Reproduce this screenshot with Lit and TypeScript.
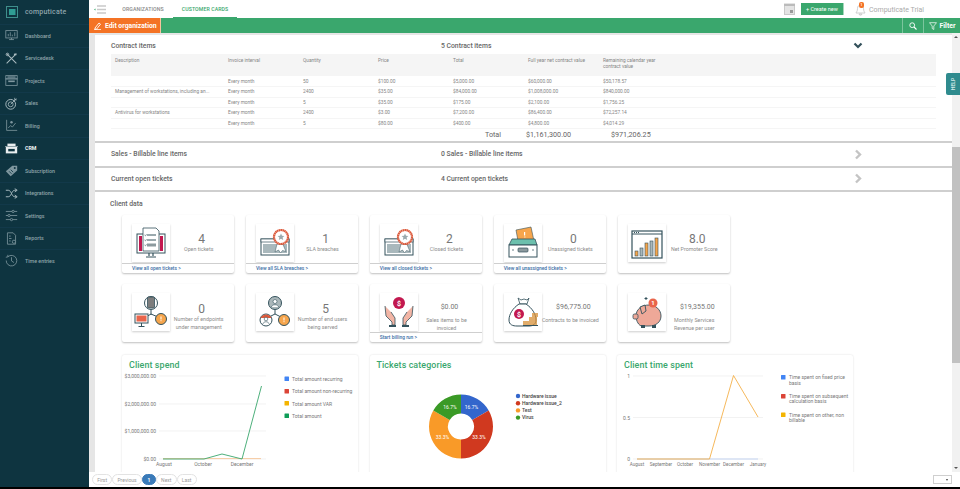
import { LitElement, html, css, svg } from "lit";
import { customElement } from "lit/decorators.js";

const S = "#7f979f";
const navIcons: Record<string, any> = {
  Dashboard: svg`<rect x="1" y="2" width="14" height="9" fill="none" stroke="${S}"/><path d="M4 9V6M6.5 9V4M9 9V7M12 9V4M5 13h6M8 11v2" stroke="${S}" fill="none"/>`,
  Servicedesk: svg`<path d="M2 2l12 12M14 2L2 14" stroke="#a9babf" stroke-width="1.3" fill="none"/><circle cx="3" cy="3" r="1.6" fill="none" stroke="#a9babf"/><rect x="11" y="2" width="3" height="2" fill="#a9babf"/>`,
  Projects: svg`<rect x="1" y="2" width="14" height="4" fill="none" stroke="${S}"/><rect x="1" y="6" width="14" height="8" fill="none" stroke="${S}"/><rect x="4" y="8" width="8" height="2" fill="${S}"/><rect x="3" y="3" width="10" height="1.5" fill="${S}"/>`,
  Sales: svg`<circle cx="7" cy="9" r="6" fill="none" stroke="#a9babf" stroke-width="1.2"/><circle cx="7" cy="9" r="3" fill="none" stroke="#a9babf"/><path d="M7 9l7-7M12 1v2.500h2.500" stroke="#a9babf" fill="none"/>`,
  Billing: svg`<path d="M2 1v13h13" fill="none" stroke="${S}"/><path d="M4 11l3-3 2 2 4-5" fill="none" stroke="${S}"/><circle cx="8" cy="4" r="1.500" fill="${S}"/>`,
  CRM: svg`<rect x="1" y="6" width="14" height="8" fill="#e9eef0"/><rect x="3" y="2" width="10" height="3" fill="#e9eef0"/><rect x="4" y="8.500" width="8" height="3" fill="#0e3440"/><rect x="0" y="5" width="16" height="1" fill="#9fb0b5"/>`,
  Subscription: svg`<path d="M1 9l8-7h6v6l-8 7z" fill="${S}"/><circle cx="12" cy="5" r="1.200" fill="#0e3440"/><path d="M5 9l3 3M7 7l3 3" stroke="#0e3440" fill="none"/>`,
  Integrations: svg`<path d="M1 4h3c4 0 4 8 8 8h2M1 12h3c4 0 4-8 8-8h2M12 2l3 2-3 2M12 10l3 2-3 2" stroke="#a9babf" stroke-width="1.200" fill="none"/>`,
  Settings: svg`<path d="M1 3h14M1 8h14M1 13h14" stroke="${S}" fill="none"/><circle cx="10" cy="3" r="1.400" fill="#0e3440" stroke="${S}"/><circle cx="5" cy="8" r="1.400" fill="#0e3440" stroke="${S}"/><circle cx="8" cy="13" r="1.400" fill="#0e3440" stroke="${S}"/>`,
  Reports: svg`<path d="M3 1h7l3 3v11H3z" fill="none" stroke="${S}"/><path d="M5 5h2M5 8h3M5 11h2" stroke="${S}" fill="none"/><circle cx="11" cy="12" r="2" fill="#0e3440" stroke="${S}"/>`,
  "Time entries": svg`<path d="M3.500 3.500A6.500 6.500 0 1 1 1.500 8" fill="none" stroke="${S}"/><path d="M8 4v4.500l3 2M1 4l2.500-.500V1" stroke="${S}" fill="none"/>`,
};
const nav = ["Dashboard", "Servicedesk", "Projects", "Sales", "Billing", "CRM", "Subscription", "Integrations", "Settings", "Reports", "Time entries"];

const D = "#34525c";
const badge = svg`
  <rect x="5" y="15" width="28" height="16" fill="#fff" stroke="${D}" stroke-width="1"/>
  <rect x="5" y="15" width="28" height="3" fill="#fff" stroke="${D}" stroke-width=".7"/>
  <rect x="7" y="20" width="24" height="9" fill="#a9b8bc"/>
  <path d="M21 20l-2 8 3.500-2 2 3 2-2.500 3.500 1-3-7z" fill="#fff" stroke="${D}" stroke-width=".5"/>
  <circle cx="25" cy="13" r="7" fill="#fff" stroke="#dc5a3c" stroke-width="2.200" stroke-dasharray="1.600 .3"/>
  <path d="M25 9.500l1 2.300 2.400.2-1.800 1.600.6 2.400-2.200-1.300-2.200 1.300.6-2.400-1.800-1.600 2.400-.2z" fill="#9aa9ad"/>`;
const qmark = (cx: number, cy: number) => svg`<circle cx="${cx}" cy="${cy}" r="5.500" fill="#f6a54c" stroke="${D}" stroke-width="1"/><rect x="${cx - .5}" y="${cy - 2.500}" width="1" height="3" fill="#fff"/><rect x="${cx - .5}" y="${cy + 1.200}" width="1" height="1" fill="#fff"/>`;
const icons: Record<string, any> = {
  open: svg`
    <rect x="5" y="10" width="28" height="19" fill="#fff" stroke="${D}"/>
    <rect x="7" y="12" width="3" height="15" fill="#c2184f"/><rect x="28" y="12" width="3" height="15" fill="#c2184f"/>
    <path d="M11 4h13l3 3v20H11z" fill="#fff" stroke="${D}" stroke-width=".8"/>
    <path d="M15 11h9M15 16h9" stroke="${D}" stroke-width="1"/><rect x="15" y="19.500" width="9" height="3" fill="#8c9a9e"/>
    <path d="M12.500 11l1 .8 1-1.500M12.500 16l1 .8 1-1.500M12.500 21l1 .8 1-1.500" stroke="${D}" stroke-width=".6" fill="none"/>
    <path d="M17 29v3M21 29v3M14 33h10" stroke="${D}" stroke-width="1.200"/>`,
  sla: badge,
  closed: badge,
  unassigned: svg`
    <path d="M12 6l15-3 3 14H14z" fill="#f6a54c" stroke="${D}" stroke-width=".6"/>
    <rect x="20" y="8" width="1.200" height="3.500" fill="#fff"/><rect x="20.400" y="12.500" width="1" height="1" fill="#fff"/>
    <path d="M8 15h23l2 6H5z" fill="#6cc0ad" stroke="${D}" stroke-width=".8"/>
    <rect x="5" y="21" width="28" height="12" fill="#fff" stroke="${D}"/>
    <rect x="14" y="24" width="10" height="4" rx="1" fill="#8c9a9e" stroke="${D}" stroke-width=".7"/>
    <circle cx="9" cy="26" r=".7" fill="${D}"/><circle cx="29" cy="26" r=".7" fill="${D}"/>`,
  nps: svg`
    <rect x="4" y="7" width="30" height="27" fill="#fff" stroke="${D}" stroke-width="1.200"/>
    <path d="M4 10h30" stroke="${D}"/><path d="M6 8.500h1M8 8.500h1M10 8.500h1" stroke="${D}"/>
    <rect x="7" y="27" width="3" height="5" fill="#f6a54c" stroke="${D}" stroke-width=".6"/>
    <rect x="12" y="24" width="3" height="8" fill="#aab7ba" stroke="${D}" stroke-width=".6"/>
    <rect x="17" y="19" width="3" height="13" fill="#f6a54c" stroke="${D}" stroke-width=".6"/>
    <rect x="22" y="17" width="3" height="15" fill="#aab7ba" stroke="${D}" stroke-width=".6"/>
    <rect x="27" y="14" width="3" height="18" fill="#f6a54c" stroke="${D}" stroke-width=".6"/>`,
  endpoints: svg`
    <circle cx="19" cy="10" r="6.500" fill="#fff" stroke="${D}"/>
    <rect x="15.500" y="4" width="7" height="11" rx="1" fill="#7d7d7d" stroke="${D}" stroke-width=".8"/>
    <path d="M19 17v5M19 21l-5 3M19 21l7 3" stroke="${D}" fill="none"/>
    <rect x="3" y="21" width="13" height="9" fill="#fff" stroke="${D}"/><rect x="4.500" y="22.500" width="10" height="6" fill="#e9654b"/>
    <path d="M9.500 30v3M6.500 33.500h6" stroke="${D}"/>${qmark(29, 26)}`,
  users: svg`
    <circle cx="19" cy="10" r="6.500" fill="#aab7ba" stroke="${D}"/><circle cx="19" cy="8.500" r="2" fill="#fff" stroke="${D}" stroke-width=".6"/><path d="M15.500 14c0-3 7-3 7 0" fill="#fff" stroke="${D}" stroke-width=".6"/>
    <path d="M19 17v4M19 21l-6 3M19 21l6 3" stroke="${D}" fill="none"/>
    <circle cx="10" cy="27" r="6" fill="#fff" stroke="${D}"/><path d="M4.500 25a6 6 0 0 1 11 0z" fill="#dc5a3c"/><circle cx="10" cy="26" r="1.800" fill="#fff" stroke="${D}" stroke-width=".6"/><path d="M7 31c0-3 6-3 6 0" fill="#fff" stroke="${D}" stroke-width=".6"/>
    ${qmark(28, 27)}`,
  sales: svg`
    <circle cx="19" cy="10" r="6" fill="#c2184f"/><text x="19" y="12.500" text-anchor="middle" fill="#fff" font-size="7" font-weight="700" font-family="Roboto, sans-serif">$</text>
    <path d="M5 13l1 10 6 6v3h3v-7l-4-6" fill="#f2b5a5" stroke="${D}" stroke-width=".8"/>
    <path d="M33 13l-1 10-6 6v3h-3v-7l4-6" fill="#f2b5a5" stroke="${D}" stroke-width=".8"/>
    <rect x="9" y="32" width="7" height="2" fill="${D}"/><rect x="22" y="32" width="7" height="2" fill="${D}"/>`,
  contracts: svg`
    <path d="M14 5l3 2 3-1 3 1 2-2-2 6h-7z" fill="#fff" stroke="${D}" stroke-width=".8"/>
    <path d="M15 11c-6 4-10 10-10 16 0 5 4 6 8 6h12c4 0 7-2 7-6 0-6-4-12-10-16z" fill="#fff" stroke="${D}"/>
    <circle cx="15" cy="21" r="5" fill="#c2184f"/><text x="15" y="23.500" text-anchor="middle" fill="#fff" font-size="7" font-weight="700" font-family="Roboto, sans-serif">$</text>
    <path d="M19 31h6M19 29h6" stroke="#d7913a" stroke-width="1.400"/><path d="M25 31h8M25 29h8M25 27h8M25 25h8M28 23h6M28 21h6" stroke="#d7913a" stroke-width="1.400"/>
    <path d="M19 32.500h15" stroke="${D}"/>`,
  piggy: svg`
    <path d="M8 23c0-7 6-11 13-11s12 5 12 11-5 10-12 10H14c-3 0-6-5-6-10z" fill="#eea898" stroke="${D}" stroke-width=".9"/>
    <path d="M12 14l5-2 1 6-4 3z" fill="#eea898" stroke="${D}" stroke-width=".9"/>
    <rect x="5" y="21" width="5" height="5" rx="1.500" fill="#eea898" stroke="${D}" stroke-width=".8"/>
    <rect x="13" y="32" width="4" height="3" fill="${D}"/><rect x="24" y="32" width="4" height="3" fill="${D}"/>
    <circle cx="25" cy="10" r="4.500" fill="#e9654b"/><text x="25" y="12" text-anchor="middle" fill="#fff" font-size="6" font-weight="700" font-family="Roboto, sans-serif">1</text>
    <path d="M18 4v3M16.500 5.500h3" stroke="${D}"/>`,
};

type Card = { icon: string; big: string; label: string[]; link?: string; money?: boolean };
const cards: Card[] = [
  { icon: "open", big: "4", label: ["Open tickets"], link: "View all open tickets >" },
  { icon: "sla", big: "1", label: ["SLA breaches"], link: "View all SLA breaches >" },
  { icon: "closed", big: "2", label: ["Closed tickets"], link: "View all closed tickets >" },
  { icon: "unassigned", big: "0", label: ["Unassigned tickets"], link: "View all unassigned tickets >" },
  { icon: "nps", big: "8.0", label: ["Net Promoter Score"] },
  { icon: "endpoints", big: "0", label: ["Number of endpoints", "under management"] },
  { icon: "users", big: "5", label: ["Number of end users", "being served"] },
  { icon: "sales", big: "$0.00", label: ["Sales items to be", "invoiced"], link: "Start billing run >", money: true },
  { icon: "contracts", big: "$96,775.00", label: ["Contracts to be invoiced"], money: true },
  { icon: "piggy", big: "$19,355.00", label: ["Monthly Services", "Revenue per user"], money: true },
];

const rows = [
  ["", "Every month", "50", "$100.00", "$5,000.00", "$60,000.00", "$50,178.57"],
  ["Management of workstations, including an...", "Every month", "2400", "$35.00", "$84,000.00", "$1,008,000.00", "$840,000.00"],
  ["", "Every month", "5", "$35.00", "$175.00", "$2,100.00", "$1,756.25"],
  ["Antivirus for workstations", "Every month", "2400", "$3.00", "$7,200.00", "$86,400.00", "$72,257.14"],
  ["", "Every month", "5", "$80.00", "$400.00", "$4,800.00", "$4,014.29"],
];
const heads = ["Description", "Invoice interval", "Quantity", "Price", "Total", "Full year net contract value", "Remaining calendar year contract value"];

const grid = (y: number, x1: number, x2: number) => svg`<line x1="${x1}" x2="${x2}" y1="${y}" y2="${y}" stroke="#ececec" stroke-width=".7"/>`;
const t = (x: number, y: number, s: string, a = "start", c = "#777") => svg`<text x="${x}" y="${y}" text-anchor="${a}" fill="${c}">${s}</text>`;
const sq = (x: number, y: number, c: string) => svg`<rect x="${x}" y="${y}" width="4.500" height="4.500" rx=".5" fill="${c}"/>`;

function arc(cx: number, cy: number, R: number, r: number, a0: number, a1: number) {
  const p = (rad: number, a: number) => {
    const v = (a - 90) * Math.PI / 180;
    return `${(cx + rad * Math.cos(v)).toFixed(2)} ${(cy + rad * Math.sin(v)).toFixed(2)}`;
  };
  const l = a1 - a0 > 180 ? 1 : 0;
  return `M${p(R, a0)}A${R} ${R} 0 ${l} 1 ${p(R, a1)}L${p(r, a1)}A${r} ${r} 0 ${l} 0 ${p(r, a0)}Z`;
}

@customElement("app-root")
export class AppRoot extends LitElement {
  static styles = css`
    :host { display: block; width: 960px; height: 489px; overflow: hidden; background: #000; font-family: Roboto, "Liberation Sans", sans-serif; position: relative; }
    .shell { display: flex; height: 487px; }
    .side { width: 89px; flex: none; background: #0e3440; color: #8fa4aa; }
    .logo { height: 24px; display: flex; align-items: center; gap: 7px; padding-left: 6px; font-size: 7px; font-weight: 500; color: #8fa6ad; letter-spacing: .2px; }
    .nav { display: flex; align-items: center; height: 22.500px; padding-left: 5px; gap: 7px; font-size: 5.300px; font-weight: 500; border-top: 1px solid #12394a; box-sizing: border-box; }
    .nav svg { width: 13px; height: 13px; flex: none; }
    .nav.on { color: #eef3f4; font-weight: 700; }
    .main { flex: 1; min-width: 0; display: flex; flex-direction: column; }
    .top { height: 18px; flex: none; background: #fff; display: flex; align-items: center; padding-left: 5px; box-sizing: border-box; }
    .burger { width: 12px; height: 9px; flex: none; }
    .tab { font-size: 5.200px; color: #888; letter-spacing: .1px; height: 18px; display: flex; align-items: center; justify-content: center; box-sizing: border-box; font-weight: 500; white-space: nowrap; }
    .tab.a { width: 50px; margin-left: 12px; }
    .tab.b { width: 64px; margin-left: 5px; color: #3aa76d; border-bottom: 1px solid #3aa76d; }
    .spacer { flex: 1; }
    .cal { width: 11px; height: 12px; margin-right: 6px; }
    .create { width: 43px; height: 12px; background: #3aa76d; color: #fff; font-size: 5.500px; display: flex; align-items: center; justify-content: center; box-sizing: border-box; border-right: 1px solid #a5d6bb; }
    .bell { position: relative; width: 11px; height: 13px; margin-left: 11px; }
    .bell svg { width: 11px; height: 13px; display: block; }
    .bell b { position: absolute; left: 4px; top: -1px; width: 5px; height: 6px; border-radius: 2px; background: #f47325; color: #fff; font-size: 4px; line-height: 6px; text-align: center; font-weight: 500; }
    .user { font-size: 7px; color: #aaa; margin: 2px 36px 0 3px; white-space: nowrap; }
    .green { height: 15px; flex: none; background: #3aa76d; display: flex; align-items: stretch; color: #fff; font-weight: 700; font-size: 6.800px; }
    .edit { width: 72px; background: #f47325; display: flex; align-items: center; gap: 4px; padding-left: 5px; box-sizing: border-box; border-right: 1px solid #f7c39f; white-space: nowrap; }
    .edit svg { width: 7px; height: 8px; flex: none; }
    .g-btn { display: flex; align-items: center; justify-content: center; border-left: 1px solid #7cc59d; box-sizing: border-box; gap: 3px; }
    .g-btn.search { width: 21px; }
    .g-btn.filter { width: 37px; }
    .g-btn svg { width: 8px; height: 8px; }
    .scroll { flex: 1; min-height: 0; display: flex; background: #e6e6e6; }
    .page { flex: 1; min-width: 0; overflow: hidden; padding: 2px 0 0 6px; }
    .panel { background: #fff; }
    .sec { background: #fff; padding: 0 16px; border-bottom: 2px solid #cfcfcf; box-sizing: border-box; }
    .head { display: grid; grid-template-columns: 330px 412px 1fr; align-items: center; box-sizing: border-box; font-size: 6.800px; font-weight: 500; color: #666; }
    .sec.c { height: 108px; }
    .sec.c .head { height: 19px; padding-top: 3px; }
    .sec.r { height: 24.500px; }
    .sec.r .head { height: 22.500px; }
    .chev { width: 10px; height: 8px; display: block; }
    .chev.more { height: 11px; }
    table { width: 825px; border-collapse: collapse; table-layout: fixed; font-size: 4.800px; color: #858585; }
    col.first { width: 113px; }
    col.std { width: 75px; }
    th { background: #f5f5f5; font-weight: 400; text-align: left; vertical-align: top; padding: 4px 4px 0 4px; height: 18px; line-height: 6px; }
    td { height: 10.500px; padding: 0 4px; border-bottom: 1px solid #f5f5f5; box-sizing: border-box; white-space: nowrap; overflow: hidden; }
    .total { display: grid; grid-template-columns: 390px 85px 1fr; width: 600px; font-size: 7.200px; color: #666; height: 10px; align-items: center; white-space: nowrap; }
    .total .lbl { text-align: right; }
    .total .val { padding-left: 25px; }
    .client { padding: 7.500px 15px 0 15px; }
    .client h3 { margin: 0; font-size: 6.800px; font-weight: 500; color: #666; line-height: 9px; }
    .cards { display: grid; grid-template-columns: repeat(5, 112.400px); column-gap: 11.500px; row-gap: 11px; margin: 6.500px 0 0 12px; }
    .card { height: 58px; background: #fff; border-radius: 2px; box-shadow: 0 1px 2px rgba(0,0,0,.25); display: flex; flex-direction: column; }
    .body { flex: 1; display: flex; min-height: 0; padding: 9px 0 0 10px; }
    .ico { width: 38px; height: 38px; flex: none; background: #fff; box-shadow: 0 1px 2px rgba(0,0,0,.2); }
    .ico svg { width: 38px; height: 38px; display: block; }
    .txt { flex: 1; text-align: center; color: #8c8c8c; font-size: 5.300px; line-height: 8px; padding: 10px 7px 0 0; white-space: nowrap; }
    .txt .big { font-size: 12px; line-height: 11px; color: #777; transform: translateX(3px); }
    .card.two .txt { padding-top: 11px; }
    .card.money .txt { padding-top: 9.500px; }
    .card.money .txt .big { font-size: 7px; line-height: 9px; margin-bottom: 4px; }
    .link { height: 9.500px; margin-top: 1px; border-top: 1px solid #cfcfcf; padding-left: 10px; color: #3a6ea5; font-size: 4.900px; line-height: 9px; font-weight: 500; }
    .charts { display: grid; grid-template-columns: repeat(3, 236px); column-gap: 11.500px; margin: 13px 0 0 12px; }
    .chart { height: 130px; background: #fff; box-shadow: 0 0 2px rgba(0,0,0,.15); border-radius: 2px; overflow: hidden; }
    .chart h4 { margin: 0; height: 15px; box-sizing: border-box; padding: 4px 0 0 7px; font-size: 8.900px; font-weight: 500; color: #3aa76d; line-height: 12px; letter-spacing: .1px; }
    .chart svg { display: block; width: 236px; height: 111px; font-family: Roboto, sans-serif; font-size: 5px; }
    .bar { width: 8px; flex: none; background: #f1f1f1; display: flex; flex-direction: column; align-items: center; justify-content: space-between; position: relative; }
    .thumb { position: absolute; left: 0; right: 0; top: 114px; height: 216px; background: #c1c1c1; }
    .arr-u { width: 0; height: 0; border: 2px solid transparent; border-bottom: 2.500px solid #555; margin-top: 1px; }
    .arr-d { width: 0; height: 0; border: 2px solid transparent; border-top: 2.500px solid #555; margin-bottom: 1px; }
    .foot { height: 15px; flex: none; background: #fff; display: flex; align-items: center; padding-left: 3px; font-size: 5px; color: #999; }
    .pg { height: 11px; padding: 0 4.200px; border: .7px solid #e3e3e3; border-radius: 6px; display: flex; align-items: center; box-sizing: border-box; }
    .pg.on { background: #3a7ab8; color: #fff; border-color: #3a7ab8; font-weight: 700; width: 14px; padding: 0; justify-content: center; }
    .sel { margin-left: auto; margin-right: 8px; width: 19px; height: 9px; border: .7px solid #cfcfcf; box-sizing: border-box; position: relative; }
    .sel i { position: absolute; right: 3px; top: 3px; border: 1.500px solid transparent; border-top: 2px solid #444; }
    .help { position: absolute; right: 0; top: 73px; width: 14px; height: 22px; background: #2f8b8e; border-radius: 2px 0 0 2px; color: #d5eaea; font-size: 5px; font-weight: 500; display: flex; align-items: center; justify-content: center; }
    .help span { transform: rotate(-90deg); }
  `;

  render() {
    const chev = (d: boolean) => d
      ? html`<svg class="chev" viewBox="0 0 10 8"><path d="M1.500 1.500L5 5l3.500-3.500" fill="none" stroke="#33505a" stroke-width="2.200"/></svg>`
      : html`<svg class="chev more" viewBox="0 0 10 11"><path d="M3 1.500l4 4-4 4" fill="none" stroke="#c4c4c4" stroke-width="2.400"/></svg>`;
    return html`
      <div class="shell">
        <aside class="side">
          <div class="logo">
            <svg width="12" height="12" viewBox="0 0 12 12"><rect x=".5" y=".5" width="11" height="11" fill="none" stroke="#3f8f8c"/><rect x="3" y="3" width="6.500" height="6" fill="#2f9d94"/></svg>
            computicate
          </div>
          ${nav.map((n) => html`<div class="nav ${n === "CRM" ? "on" : ""}"><svg viewBox="0 0 16 16">${navIcons[n]}</svg>${n}</div>`)}
        </aside>
        <div class="main">
          <div class="top">
            <svg class="burger" viewBox="0 0 12 9"><path d="M3 1h9M3 4.500h9M3 8h9" stroke="#c9c9c9" stroke-width="1.400"/><path d="M0 4.500l1.500-1v2z" fill="#3aa76d"/></svg>
            <div class="tab a">ORGANIZATIONS</div>
            <div class="tab b">CUSTOMER CARDS</div>
            <div class="spacer"></div>
            <svg class="cal" viewBox="0 0 11 12"><rect x=".5" y="1" width="10" height="10.500" fill="#e4e4e4" stroke="#c9c9c9"/><rect x="0" y="1" width="11" height="2" fill="#bbb"/><rect x="6" y="7" width="3" height="3" fill="#999"/></svg>
            <div class="create">+ Create new</div>
            <div class="bell">
              <svg viewBox="0 0 11 13"><path d="M5.500 2c-2 0-3 1.500-3 3.500 0 3-1.500 4-1.500 4.500h9c0-.5-1.500-1.500-1.500-4.500 0-2-1-3.500-3-3.500zM4 11h3c0 1.500-3 1.500-3 0z" fill="none" stroke="#c2c2c2" stroke-width=".8"/></svg>
              <b>1</b>
            </div>
            <div class="user">Computicate Trial</div>
          </div>
          <div class="green">
            <div class="edit">
              <svg viewBox="0 0 7 8"><path d="M1 6l4-5 1.500 1.200-4 5H1zM0 7.700h7" fill="none" stroke="#fff" stroke-width=".9"/></svg>
              Edit organization
            </div>
            <div class="spacer"></div>
            <div class="g-btn search">
              <svg viewBox="0 0 8 8"><circle cx="3.200" cy="3.200" r="2.400" fill="none" stroke="#fff" stroke-width=".9"/><path d="M5 5l2.500 2.500" stroke="#fff" stroke-width="1.100"/></svg>
            </div>
            <div class="g-btn filter">
              <svg viewBox="0 0 8 8"><path d="M.5.700h7L4.800 4v3.500L3.200 6.500V4z" fill="none" stroke="#fff" stroke-width=".7"/></svg>
              Filter
            </div>
          </div>
          <div class="scroll">
            <div class="page">
              <div class="panel">
                <section class="sec c">
                  <div class="head"><span>Contract items</span><span>5 Contract items</span>${chev(true)}</div>
                  <table>
                    <colgroup><col class="first"/><col class="std"/><col class="std"/><col class="std"/><col class="std"/><col class="std"/><col class="std"/><col/></colgroup>
                    <tr>${heads.map((h) => html`<th>${h}</th>`)}<th></th></tr>
                    ${rows.map((r) => html`<tr>${r.map((c) => html`<td>${c}</td>`)}<td></td></tr>`)}
                  </table>
                  <div class="total"><span class="lbl">Total</span><span class="val">$1,161,300.00</span><span class="val">$971,206.25</span></div>
                </section>
                <section class="sec r"><div class="head"><span>Sales - Billable line items</span><span>0 Sales - Billable line items</span>${chev(false)}</div></section>
                <section class="sec r"><div class="head"><span>Current open tickets</span><span>4 Current open tickets</span>${chev(false)}</div></section>
                <section class="client">
                  <h3>Client data</h3>
                  <div class="cards">
                    ${cards.map((c) => html`
                      <div class="card ${c.label.length > 1 ? "two" : ""} ${c.money ? "money" : ""}">
                        <div class="body">
                          <div class="ico"><svg viewBox="0 0 38 38">${icons[c.icon]}</svg></div>
                          <div class="txt"><div class="big">${c.big}</div>${c.label.map((l) => html`<div>${l}</div>`)}</div>
                        </div>
                        ${c.link ? html`<div class="link">${c.link}</div>` : ""}
                      </div>`)}
                  </div>
                  <div class="charts">
                    <div class="chart">
                      <h4>Client spend</h4>
                      <svg viewBox="122 369 236 111">
                        ${[375, 403, 430, 458].map((y) => grid(y, 159, 266))}
                        ${t(156, 377, "$3,000,000.00", "end")}${t(156, 404.500, "$2,000,000.00", "end")}${t(156, 432, "$1,000,000.00", "end")}${t(156, 459.500, "$0.00", "end")}
                        ${t(164, 465, "August", "middle")}${t(203, 465, "October", "middle")}${t(242, 465, "December", "middle")}
                        <path d="M163 457.600H261" stroke="#f6c9a0" stroke-width="1" fill="none"/>
                        <path d="M163 458L204 458L222 453L242 458L261.500 385" stroke="#3aa76d" stroke-width=".9" fill="none"/>
                        ${sq(284.500, 375.500, "#4285f4")}${t(292, 379.500, "Total amount recurring")}
                        ${sq(284.500, 388, "#db4437")}${t(292, 392, "Total amount non-recurring")}
                        ${sq(284.500, 400, "#f4b400")}${t(292, 404.500, "Total amount VAR")}
                        ${sq(284.500, 412.500, "#0f9d58")}${t(292, 417, "Total amount")}
                      </svg>
                    </div>
                    <div class="chart">
                      <h4>Tickets categories</h4>
                      <svg viewBox="369.500 369 236 111">
                        <path d="${arc(460.500, 425.500, 32, 13, 0, 60)}" fill="#3366cc"/>
                        <path d="${arc(460.500, 425.500, 32, 13, 60, 180)}" fill="#d0391f"/>
                        <path d="${arc(460.500, 425.500, 32, 13, 180, 300)}" fill="#f99a28"/>
                        <path d="${arc(460.500, 425.500, 32, 13, 300, 360)}" fill="#3a9a26"/>
                        ${t(471, 408, "16.7%", "middle", "#fff")}${t(449.500, 408, "16.7%", "middle", "#fff")}${t(442, 437.500, "33.3%", "middle", "#fff")}${t(478.500, 437.500, "33.3%", "middle", "#fff")}
                        ${[["#3366cc", "Hardware issue"], ["#d0391f", "Hardware issue_2"], ["#f99a28", "Test"], ["#3a9a26", "Virus"]].map(([c, l], i) => svg`<circle cx="517.500" cy="${395 + i * 7.200}" r="2.200" fill="${c}"/><text x="521.500" y="${396.800 + i * 7.200}" fill="#444" font-weight="500">${l}</text>`)}
                      </svg>
                    </div>
                    <div class="chart">
                      <h4>Client time spent</h4>
                      <svg viewBox="617 369 236 111">
                        ${[375, 416.500, 458].map((y) => grid(y, 633, 763))}
                        ${t(630, 377, "1", "end")}${t(630, 418.500, "0.5", "end")}${t(630, 459.500, "0", "end")}
                        ${([["August", 637], ["September", 661], ["October", 685], ["November", 709.500], ["December", 733.500], ["January", 758]] as [string, number][]).map(([l, x]) => svg`<text x="${x}" y="${465}" text-anchor="middle" fill="#777" font-size="4.600">${l}</text>`)}
                        <path d="M637 458H758" stroke="#c3d3f2" stroke-width="1.200" fill="none"/>
                        <path d="M637 458H709.500L733.500 374.500L758 416" stroke="#f4b04a" stroke-width=".9" fill="none"/>
                        ${sq(781, 374, "#4285f4")}${t(789, 378, "Time spent on fixed price")}${t(789, 383.500, "basis")}
                        ${sq(781, 393, "#db4437")}${t(789, 397, "Time spent on subsequent")}${t(789, 402, "calculation basis")}
                        ${sq(781, 411.500, "#f4b400")}${t(789, 415.500, "Time spent on other, non")}${t(789, 421, "billable")}
                      </svg>
                    </div>
                  </div>
                </section>
              </div>
            </div>
            <div class="bar"><div class="thumb"></div><div class="arr-u"></div><div class="arr-d"></div></div>
          </div>
          <div class="foot">
            <div class="pg">First</div><div class="pg">Previous</div><div class="pg on">1</div><div class="pg">Next</div><div class="pg">Last</div>
            <div class="sel"><i></i></div>
          </div>
        </div>
      </div>
      <div class="help"><span>HELP</span></div>
    `;
  }
}
